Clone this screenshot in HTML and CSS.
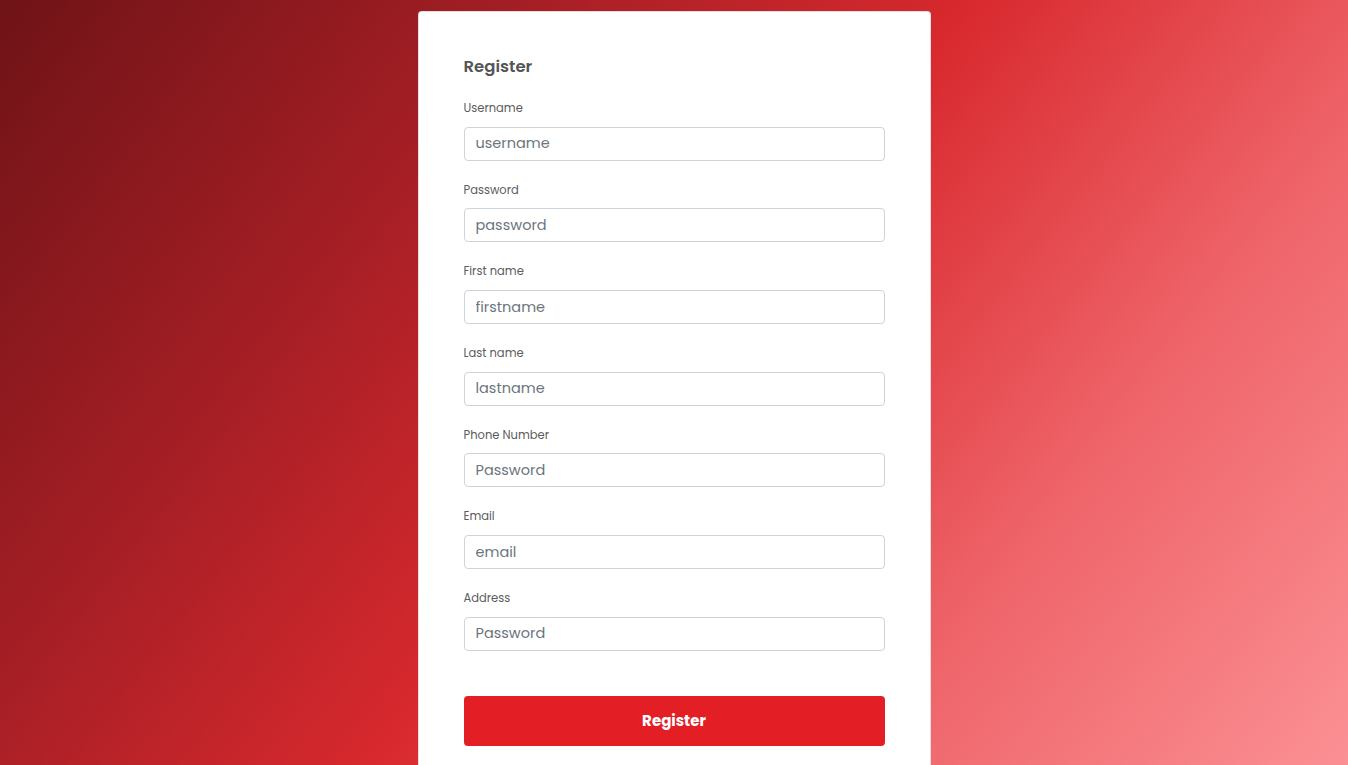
FILE: index.html
```html
<!DOCTYPE html>
<html lang="en">
<head>
<meta charset="utf-8">
<title>Register</title>
<link rel="stylesheet" href="styles.css">
</head>
<body>
<main class="page">
  <form class="card">
    <h1 class="title">Register</h1>
    <div class="field">
      <label class="label">Username</label>
      <input class="input" type="text" placeholder="username">
    </div>
    <div class="field">
      <label class="label">Password</label>
      <input class="input" type="password" placeholder="password">
    </div>
    <div class="field">
      <label class="label">First name</label>
      <input class="input" type="text" placeholder="firstname">
    </div>
    <div class="field">
      <label class="label">Last name</label>
      <input class="input" type="text" placeholder="lastname">
    </div>
    <div class="field">
      <label class="label">Phone Number</label>
      <input class="input" type="text" placeholder="Password">
    </div>
    <div class="field">
      <label class="label">Email</label>
      <input class="input" type="email" placeholder="email">
    </div>
    <div class="field">
      <label class="label">Address</label>
      <input class="input" type="text" placeholder="Password">
    </div>
    <button class="btn" type="button">Register</button>
  </form>
</main>
</body>
</html>
```
FILE: styles.css
```css
html {
  min-height: 100%;
  background: linear-gradient(128deg, #6f1317 0%, #a61f25 28%, #d8292e 50%, #ee6368 74%, #fb9094 100%) fixed;
}
body {
  margin: 0;
  font-family: "Poppins", "Inter", "Noto Sans", sans-serif;
}
.page {
  display: flex;
  justify-content: center;
  padding-top: 11px;
}
.card {
  box-sizing: border-box;
  width: 513px;
  background: #fff;
  border: 1px solid rgba(0,0,0,0.12);
  border-radius: 4px;
  padding: 43px 45px 60px;
  display: flex;
  flex-direction: column;
}
.title {
  margin: 0 0 21px;
  font-size: 16.5px;
  line-height: 24px;
  font-weight: 600;
  color: #555;
}
.field {
  display: flex;
  flex-direction: column;
  margin-bottom: 21px;
}
.label {
  font-size: 11.5px;
  line-height: 16px;
  color: #5c5c5c;
  margin-bottom: 10.7px;
}
.input {
  box-sizing: border-box;
  height: 34px;
  border: 1px solid #ced4da;
  border-radius: 4px;
  padding: 0 11px;
  font-family: inherit;
  font-size: 14.5px;
  color: #495057;
  background: #fff;
  outline: none;
}
.input::placeholder {
  color: #6c757d;
  opacity: 1;
}
.btn {
  margin-top: 24px;
  height: 50px;
  border: 0;
  border-radius: 4px;
  background: #e31e24;
  color: #fff;
  font-family: inherit;
  font-size: 15px;
  font-weight: 700;
  cursor: pointer;
}
```
